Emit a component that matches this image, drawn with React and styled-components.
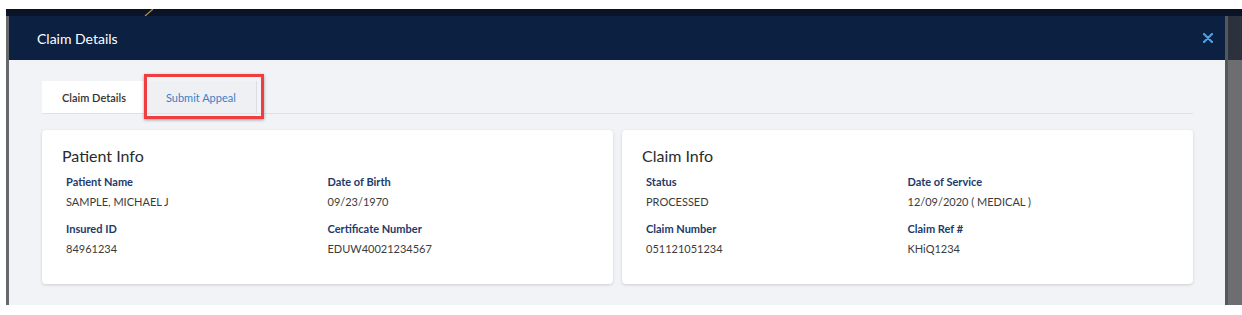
import React from "react";
import styled, { createGlobalStyle } from "styled-components";

const GlobalStyle = createGlobalStyle`
  html, body {
    margin: 0;
    padding: 0;
    background: #ffffff;
  }
  body {
    font-family: "Lato", "Open Sans", sans-serif;
  }
`;

const Page = styled.div`
  width: 1242px;
  height: 315px;
  display: flex;
  background: #ffffff;
  overflow: hidden;
`;

const Backdrop = styled.div`
  margin: 9px 0 10px 6px;
  flex: 1;
  display: flex;
  flex-direction: column;
  background: #66686c;
`;

const TopStrip = styled.div`
  height: 7px;
  background: #0b1426;
  position: relative;
  svg {
    position: absolute;
    left: 136px;
    top: 0;
  }
`;

const ModalRow = styled.div`
  flex: 1;
  display: flex;
`;

const Modal = styled.div`
  flex: 1;
  margin-left: 3px;
  display: flex;
  flex-direction: column;
  background: #f2f3f6;
`;

const Gutter = styled.div`
  width: 14px;
  display: flex;
  flex-direction: column;
  border-left: 3px solid #55575b;
  background: #6c6e72;
`;

const GutterTop = styled.div`
  height: 44px;
  background: #2b323d;
`;

const Header = styled.div`
  height: 44px;
  background: #0c2141;
  display: flex;
  align-items: center;
  justify-content: space-between;
  padding: 0 12px 0 28px;
`;

const Title = styled.h1`
  margin: 0;
  font-size: 14px;
  font-weight: 400;
  color: #ffffff;
`;

const CloseButton = styled.button`
  border: none;
  background: transparent;
  padding: 0;
  width: 10px;
  height: 10px;
  display: flex;
  cursor: pointer;
`;

const Body = styled.div`
  flex: 1;
  padding: 21px 32px 21px 33px;
  display: flex;
  flex-direction: column;
`;

const TabBar = styled.div`
  display: flex;
  border-bottom: 1px solid #dfe1e6;
  margin-bottom: 16px;
`;

const Tab = styled.div`
  position: relative;
  height: 32px;
  padding: 0 20px;
  display: flex;
  align-items: center;
  font-size: 11px;
  font-weight: ${(p) => (p.active ? 600 : 400)};
  color: ${(p) => (p.active ? "#333333" : "#3a80c6")};
  background: ${(p) => (p.active ? "#ffffff" : "#eef0f4")};
  border-right: ${(p) => (p.active ? "none" : "1px solid #dcdee3")};
`;

const Highlight = styled.span`
  position: absolute;
  left: -2px;
  top: -7px;
  width: 114px;
  height: 39px;
  border: 3px solid #ef3d40;
  box-shadow: 0 1px 3px rgba(0, 0, 0, 0.35);
  pointer-events: none;
`;

const Cards = styled.div`
  display: grid;
  grid-template-columns: 1fr 1fr;
  gap: 9px;
`;

const Card = styled.section`
  height: 154px;
  box-sizing: border-box;
  padding: 16px 24px 0 20px;
  background: #ffffff;
  border-radius: 4px;
  box-shadow: 0 1px 3px rgba(0, 0, 0, 0.16);
`;

const CardTitle = styled.h2`
  margin: 0 0 9px;
  font-size: 16px;
  font-weight: 400;
  line-height: 20px;
  color: #2b2b2b;
`;

const FieldGrid = styled.div`
  display: grid;
  grid-template-columns: 1fr 1fr;
  row-gap: 13px;
  padding-left: 4px;
`;

const Field = styled.div`
  display: flex;
  flex-direction: column;
`;

const Label = styled.span`
  font-size: 11px;
  font-weight: 700;
  line-height: 14px;
  color: #1d3a6a;
`;

const Value = styled.span`
  margin-top: 6px;
  font-size: 11px;
  font-weight: 400;
  line-height: 14px;
  color: #3c3c3c;
`;

const patient = [
  ["Patient Name", "SAMPLE, MICHAEL J"],
  ["Date of Birth", "09/23/1970"],
  ["Insured ID", "84961234"],
  ["Certificate Number", "EDUW40021234567"],
];

const claim = [
  ["Status", "PROCESSED"],
  ["Date of Service", "12/09/2020 ( MEDICAL )"],
  ["Claim Number", "051121051234"],
  ["Claim Ref #", "KHiQ1234"],
];

const InfoCard = ({ title, fields }) => (
  <Card>
    <CardTitle>{title}</CardTitle>
    <FieldGrid>
      {fields.map(([label, value]) => (
        <Field key={label}>
          <Label>{label}</Label>
          <Value>{value}</Value>
        </Field>
      ))}
    </FieldGrid>
  </Card>
);

const App = () => {
  return (
    <>
      <GlobalStyle />
      <Page>
        <Backdrop>
          <TopStrip>
            <svg width="14" height="7" viewBox="0 0 14 7">
              <path d="M3 7 L11 0" stroke="#b8923a" strokeWidth="1.2" />
            </svg>
          </TopStrip>
          <ModalRow>
            <Modal>
              <Header>
                <Title>Claim Details</Title>
                <CloseButton aria-label="Close">
                  <svg width="10" height="10" viewBox="0 0 10 10">
                    <path
                      d="M1 1 L9 9 M9 1 L1 9"
                      stroke="#4da0e6"
                      strokeWidth="2.2"
                      strokeLinecap="round"
                    />
                  </svg>
                </CloseButton>
              </Header>
              <Body>
                <TabBar>
                  <Tab active>Claim Details</Tab>
                  <Tab>
                    Submit Appeal
                    <Highlight />
                  </Tab>
                </TabBar>
                <Cards>
                  <InfoCard title="Patient Info" fields={patient} />
                  <InfoCard title="Claim Info" fields={claim} />
                </Cards>
              </Body>
            </Modal>
            <Gutter>
              <GutterTop />
            </Gutter>
          </ModalRow>
        </Backdrop>
      </Page>
    </>
  );
};

export default App;
